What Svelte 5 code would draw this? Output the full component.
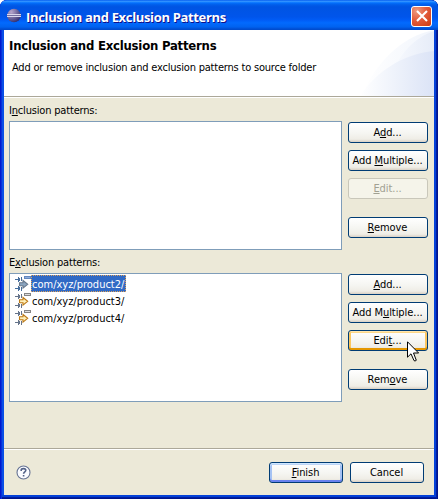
<script>
  const groups = [
    {
      label: ['I', 'n', 'clusion patterns:'],
      items: [],
      buttons: [
        { t: ['A', 'd', 'd...'] },
        { t: ['Add ', 'M', 'ultiple...'] },
        { t: ['', 'E', 'dit...'], state: 'disabled' },
        { t: ['', 'R', 'emove'] }
      ]
    },
    {
      label: ['E', 'x', 'clusion patterns:'],
      items: ['com/xyz/product2/', 'com/xyz/product3/', 'com/xyz/product4/'],
      buttons: [
        { t: ['', 'A', 'dd...'] },
        { t: ['Add M', 'u', 'ltiple...'] },
        { t: ['Edi', 't', '...'], state: 'hot' },
        { t: ['Rem', 'o', 've'] }
      ]
    }
  ];
</script>

{#snippet mnemonic(t)}<span>{t[0]}<u>{t[1]}</u>{t[2]}</span>{/snippet}

<div class="window">
  <header class="titlebar">
    <svg class="logo" width="16" height="16" viewBox="0 0 16 16">
      <defs>
        <radialGradient id="orb" cx="30%" cy="25%" r="85%">
          <stop offset="0" stop-color="#b7a6cc" />
          <stop offset=".5" stop-color="#746a9f" />
          <stop offset="1" stop-color="#29276b" />
        </radialGradient>
      </defs>
      <circle cx="7" cy="7.5" r="6.8" fill="url(#orb)" />
      <path d="M0 6.5H14M0 8.5H14" stroke="#d8d5ec" />
      <path d="M0 7.5H14" stroke="#746d9f" />
    </svg>
    <span class="title">Inclusion and Exclusion Patterns</span>
    <button class="close" aria-label="Close">
      <svg width="12" height="12" viewBox="0 0 12 12"><path d="M1 1L11 11M11 1L1 11" stroke="#fff" stroke-width="2.1" /></svg>
    </button>
  </header>

  <div class="client">
    <section class="banner">
      <svg class="swoosh" width="76" height="66" viewBox="0 0 76 66">
        <defs>
          <linearGradient id="s1"><stop offset="0" stop-color="#fff" /><stop offset="1" stop-color="#f1f5fc" /></linearGradient>
          <linearGradient id="s3"><stop offset="0" stop-color="#f8fafe" /><stop offset="1" stop-color="#e6ecf8" /></linearGradient>
          <linearGradient id="s2"><stop offset="0" stop-color="#fff" /><stop offset=".45" stop-color="#eff3fb" /><stop offset="1" stop-color="#dbe3f6" /></linearGradient>
        </defs>
        <path d="M4 66C16 34 44 6 76 0V66Z" fill="url(#s1)" />
        <path d="M34 45C41 24 56 8 76 1V45Z" fill="url(#s3)" />
        <path d="M2 66C18 42 44 24 76 21V66Z" fill="url(#s2)" />
      </svg>
      <h1>Inclusion and Exclusion Patterns</h1>
      <p>Add or remove inclusion and exclusion patterns to source folder</p>
    </section>

    <main>
      {#each groups as g}
        <section class="group">
          <div class="label">{@render mnemonic(g.label)}</div>
          <div class="row">
            <div class="list">
              {#each g.items as item, i}
                <div class="item" class:selected={i === 0}>
                  <svg width="16" height="17" viewBox="0 0 16 17" shape-rendering="crispEdges">
                    <g fill={i === 0 ? '#456d9c' : '#66748a'}>
                      <path d="M0 4h3v-2h1v1h1v3h-1v1h-1v-2h-3zM6 2h1v4h-1z" />
                      <path d="M0 13h3v-2h1v1h1v3h-1v1h-1v-2h-3zM6 12h1v4h-1z" />
                    </g>
                    <path d="M9.5 1.5h6v2h-6z" fill={i === 0 ? '#8eadd9' : '#ddd'} stroke={i === 0 ? '#6489c0' : '#858585'} />
                    <path d="M4.5 7.8H8V5.5L12.7 9.3L8 13.1V10.8H4.5Z" fill={i === 0 ? '#8ba5c0' : '#fff0b9'} stroke={i === 0 ? '#68798c' : '#bd7a16'} stroke-width="1.1" shape-rendering="auto" />
                  </svg>
                  <span>{item}</span>
                </div>
              {/each}
            </div>
            <div class="buttons">
              {#each g.buttons as b}
                <button class="btn {b.state ?? ''}" disabled={b.state === 'disabled'}>{@render mnemonic(b.t)}</button>
              {/each}
            </div>
          </div>
        </section>
      {/each}
    </main>

    <footer>
      <svg class="help" width="15" height="15" viewBox="0 0 15 15">
        <circle cx="7.5" cy="7.5" r="6.5" fill="#fafbff" stroke="#667393" stroke-width="1.1" />
        <path d="M5.2 5.9V5C5.3 3.1 9.8 3.1 9.8 5.2C9.8 6.8 7.6 6.8 7.6 8.8M7.6 10V11.6" fill="none" stroke="#536288" stroke-width="1.6" />
      </svg>
      <button class="btn primary">{@render mnemonic(['', 'F', 'inish'])}</button>
      <button class="btn">Cancel</button>
    </footer>
  </div>

  <svg class="cursor" width="13" height="22" viewBox="0 0 13 22">
    <path d="M.5 .8V16.2L4 12.8L7 19.6Q8 20.5 9.3 19.3L6.5 12H11.6Z" fill="#fff" stroke="#000" />
  </svg>
</div>

<style>
  :global(body) { background: #fff; }
  .window, .window * { box-sizing: border-box; }
  .window {
    position: relative;
    width: 438px;
    height: 499px;
    padding: 0 4px 4px;
    border-radius: 7px 7px 0 0;
    overflow: hidden;
    display: flex;
    flex-direction: column;
    background: #0a4fe6;
    box-shadow: inset 1px 0 #0019cf, inset 2px 0 #0831d9, inset -1px 0 #00138c, inset -2px 0 #001ea0, inset 0 -1px #00138c, inset 0 -2px #001ea0, inset -4px 0 #0441d8, inset 0 -4px #0441d8;
    font: 11px/13px "DejaVu Sans Condensed", "DejaVu Sans", sans-serif;
    font-stretch: condensed;
    letter-spacing: -.12px;
    color: #000;
  }
  .titlebar {
    height: 30px;
    margin: 0 -4px;
    padding: 2px 6px 0 7px;
    flex: none;
    display: flex;
    align-items: center;
    background: linear-gradient(#0058ee 0, #3593ff 4%, #288eff 6%, #127dff 8%, #036ffc 10%, #0262ee 14%, #0057e5 20%, #0054e3 24%, #0055eb 56%, #005bf5 66%, #026afe 76%, #0062ef 90%, #0054dd 94%, #0049c8 100%);
  }
  .logo { flex: none; }
  .title {
    margin: 2px 0 0 3px;
    flex: 1;
    white-space: nowrap;
    color: #fff;
    font: bold 13px/16px "Open Sans", "Noto Sans", sans-serif;
    letter-spacing: -.34px;
    text-shadow: 1px 1px #0f1089;
  }
  .close {
    width: 21px;
    height: 21px;
    padding: 0;
    display: grid;
    place-items: center;
    border: 1px solid #fff;
    border-radius: 3px;
    background: radial-gradient(circle at 25% 20%, #ed9b80, #e35c3c 45%, #cc3a10);
  }
  .client { flex: 1; display: flex; flex-direction: column; background: #ece9d8; }
  .banner {
    position: relative;
    height: 68px;
    padding: 8px 5px 0;
    background: #fff;
    border-bottom: 1px solid #fff;
    box-shadow: inset 0 -1px #aca899;
  }
  .swoosh { position: absolute; right: 0; top: 0; }
  h1 {
    margin: 0;
    font: bold 13px/16px "DejaVu Sans Condensed", sans-serif;
    font-stretch: condensed;
    letter-spacing: -.22px;
    white-space: nowrap;
  }
  p { margin: 7px 0 0 3px; white-space: nowrap; letter-spacing: -.2px; }
  main { padding: 6px 6px 0 5px; height: 350px; }
  .group { height: 152px; }
  .label { height: 17px; line-height: 13px; letter-spacing: -.18px; }
  .row { display: flex; justify-content: space-between; }
  .list {
    width: 333px;
    height: 129px;
    padding: 1px 5px;
    background: #fff;
    border: 1px solid #7f9db9;
  }
  .item { height: 17px; display: flex; align-items: center; }
  .item span { height: 17px; line-height: 17px; border: 1px dotted transparent; padding: 0 1px 0 0; letter-spacing: 0; }
  .item.selected span { background: #316ac5; color: #fff; border-color: #e0a35a; }
  .buttons { width: 80px; display: flex; flex-direction: column; gap: 7px; padding-top: 1px; }
  .buttons .btn:last-child { margin-top: 11px; }
  .btn {
    width: 80px;
    height: 21px;
    flex: none;
    padding: 0 1px 0 0;
    border: 1px solid #003c74;
    border-radius: 3px;
    background: linear-gradient(#fff, #f5f5f1 55%, #efede6 85%, #d8d0c4);
    font: inherit;
    letter-spacing: -.06px;
    line-height: 17px;
    color: #000;
    white-space: nowrap;
  }
  .btn.disabled { background: #f5f4ea; border-color: #c9c7ba; color: #a1a192; }
  .btn.hot { box-shadow: inset 0 1px #ffe5ad, inset 0 -2px #e59700, inset 2px 0 #fbc761, inset -2px 0 #fbc761, inset 0 2px #fdd889; }
  .btn.primary { box-shadow: inset 0 1px #cee7ff, inset 0 2px #bcd4f6, inset 0 -2px #6982ee, inset 2px 0 #a5c2f3, inset -2px 0 #a5c2f3; }
  u { text-decoration: underline; text-underline-offset: 1px; text-decoration-thickness: 1px; text-decoration-skip-ink: none; }
  footer {
    flex: 1;
    display: flex;
    align-items: flex-start;
    gap: 7px;
    padding: 13px 10px 0 12px;
    border-top: 1px solid #aca899;
    box-shadow: inset 0 1px #fff;
  }
  .help { margin: 3px auto 0 0; }
  footer .btn { width: 74px; }
  .cursor { position: absolute; left: 407px; top: 341px; }
</style>
